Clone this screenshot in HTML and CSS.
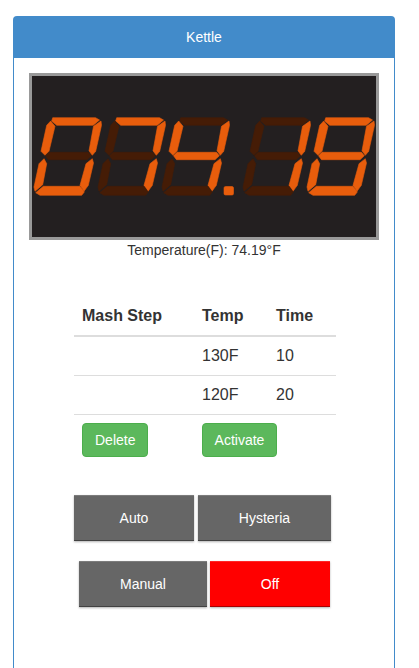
FILE: index.html
```html
<!DOCTYPE html>
<html lang="en">
<head>
    <meta charset="UTF-8">
    <meta name="viewport" content="width=device-width, initial-scale=1.0">
    <title>Kettle</title>
    <link rel="stylesheet" href="styles.css">
</head>
<body>
    <div class="panel">
        <div class="panel-heading">Kettle</div>
        <div class="panel-body">
            <div class="display">
                <svg class="display-digits" viewBox="32 76 344 161" width="344" height="161">
                    <defs>
                        <polygon id="seg-a" points="52.7,117.7 95.5,117.7 99.5,120 93.3,125.3 56.7,125.3 51.7,121"/>
                        <polygon id="seg-b" points="101,121 93.5,126.3 89,150.8 92.3,155.3 95.7,151.3 101.5,125.3"/>
                        <polygon id="seg-c" points="92.3,158.7 86,163.7 80,185.3 84,191.3 88.3,185.3 93.5,163"/>
                        <polygon id="seg-d" points="35.7,192.7 43.3,186.3 80,186.3 84.3,192 81.7,195.3 40,195.3"/>
                        <polygon id="seg-e" points="44,158.7 39,163.7 34,187 35,191.3 42.7,184.7 46.7,163.7"/>
                        <polygon id="seg-f" points="50.7,121 55,126.3 49,151.3 45,155.3 41,151.3 46.7,125.3"/>
                        <polygon id="seg-g" points="45.5,155.8 49,152.3 88.5,152.3 91.3,155.8 87,159.7 48.5,159.7"/>
                    </defs>
                    <g>
                        <use href="#seg-a" class="on"/><use href="#seg-b" class="on"/><use href="#seg-c" class="on"/>
                        <use href="#seg-d" class="on"/><use href="#seg-e" class="on"/><use href="#seg-f" class="on"/>
                        <use href="#seg-g" class="off"/>
                    </g>
                    <g transform="translate(64 0)">
                        <use href="#seg-a" class="on"/><use href="#seg-b" class="on"/><use href="#seg-c" class="on"/>
                        <use href="#seg-d" class="off"/><use href="#seg-e" class="off"/><use href="#seg-f" class="off"/>
                        <use href="#seg-g" class="off"/>
                    </g>
                    <g transform="translate(128 0)">
                        <use href="#seg-a" class="off"/><use href="#seg-b" class="on"/><use href="#seg-c" class="on"/>
                        <use href="#seg-d" class="off"/><use href="#seg-e" class="off"/><use href="#seg-f" class="on"/>
                        <use href="#seg-g" class="on"/>
                    </g>
                    <rect class="on" x="224" y="186.5" width="9.5" height="8.5" rx="1.5"/>
                    <g transform="translate(209 0)">
                        <use href="#seg-a" class="off"/><use href="#seg-b" class="on"/><use href="#seg-c" class="on"/>
                        <use href="#seg-d" class="off"/><use href="#seg-e" class="off"/><use href="#seg-f" class="off"/>
                        <use href="#seg-g" class="off"/>
                    </g>
                    <g transform="translate(273 0)">
                        <use href="#seg-a" class="on"/><use href="#seg-b" class="on"/><use href="#seg-c" class="on"/>
                        <use href="#seg-d" class="on"/><use href="#seg-e" class="on"/><use href="#seg-f" class="on"/>
                        <use href="#seg-g" class="on"/>
                    </g>
                </svg>
            </div>
            <p class="caption">Temperature(F): 74.19°F</p>

            <table class="steps">
                <thead>
                    <tr>
                        <th class="col-step">Mash Step</th>
                        <th class="col-temp">Temp</th>
                        <th class="col-time">Time</th>
                    </tr>
                </thead>
                <tbody>
                    <tr>
                        <td></td>
                        <td>130F</td>
                        <td>10</td>
                    </tr>
                    <tr>
                        <td></td>
                        <td>120F</td>
                        <td>20</td>
                    </tr>
                    <tr>
                        <td><button class="btn-success">Delete</button></td>
                        <td colspan="2"><button class="btn-success btn-activate">Activate</button></td>
                    </tr>
                </tbody>
            </table>

            <div class="mode-row mode-row-top">
                <button class="mode-btn btn-auto">Auto</button>
                <button class="mode-btn btn-hysteria">Hysteria</button>
            </div>
            <div class="mode-row mode-row-bottom">
                <button class="mode-btn btn-manual">Manual</button>
                <button class="mode-btn btn-off">Off</button>
            </div>
        </div>
    </div>
</body>
</html>
```

FILE: styles.css
```css
html, body {
    height: 100%;
}
body {
    box-sizing: border-box;
    margin: 0;
    padding: 16px 24px 0 13px;
    background-color: #fff;
    font-family: "Liberation Sans", Arial, sans-serif;
    font-size: 14px;
    color: #333;
    overflow: hidden;
}
.panel {
    box-sizing: border-box;
    height: 100%;
    border: 1px solid #428bca;
    border-bottom: none;
    border-radius: 4px 4px 0 0;
}
.panel-heading {
    height: 41px;
    line-height: 41px;
    text-align: center;
    background-color: #428bca;
    color: #fff;
}
.panel-body {
    padding: 15px;
}
.display {
    box-sizing: border-box;
    width: 350px;
    height: 167px;
    border: 3px solid #999;
    background-color: #231f20;
}
.display-digits {
    display: block;
}
.on {
    fill: #e85d0c;
    stroke: #e85d0c;
    stroke-width: 0.6;
    stroke-linejoin: round;
}
.off {
    fill: #451c06;
    stroke: #451c06;
    stroke-width: 0.6;
    stroke-linejoin: round;
}
.caption {
    margin: 0;
    height: 20px;
    line-height: 20px;
    text-align: center;
}
.steps {
    width: 262px;
    margin: 36px 0 0 45px;
    border-collapse: collapse;
    table-layout: fixed;
    font-size: 16px;
}
.steps th, .steps td {
    padding: 8px;
    line-height: 22px;
    text-align: left;
}
.steps td {
    border-top: 1px solid #ddd;
}
.steps th {
    border-bottom: 2px solid #ddd;
    line-height: 23px;
}
.col-step {
    width: 104px;
}
.col-temp {
    width: 58px;
}
.btn-success {
    display: block;
    height: 34px;
    padding: 0 12px;
    background-color: #5cb85c;
    border: 1px solid #4cae4c;
    border-radius: 4px;
    color: #fff;
    font-family: inherit;
    font-size: 14px;
}
.btn-activate {
    width: 75px;
    padding: 0;
}
.mode-row {
    display: flex;
}
.mode-row-top {
    margin: 30px 0 0 45px;
    gap: 4px;
}
.mode-row-bottom {
    margin: 20px 0 0 50px;
    gap: 3px;
}
.mode-btn {
    height: 46px;
    padding: 0;
    border: none;
    background-color: #666;
    box-shadow: inset 0 1px 0 rgba(255, 255, 255, 0.15), inset 0 -1px 0 rgba(0, 0, 0, 0.35), 0 1px 2px rgba(0, 0, 0, 0.3);
    color: #fff;
    font-family: inherit;
    font-size: 14px;
}
.btn-auto {
    width: 120px;
}
.btn-hysteria {
    width: 133px;
}
.btn-manual {
    width: 128px;
}
.btn-off {
    width: 120px;
    background-color: #f00;
}
```
